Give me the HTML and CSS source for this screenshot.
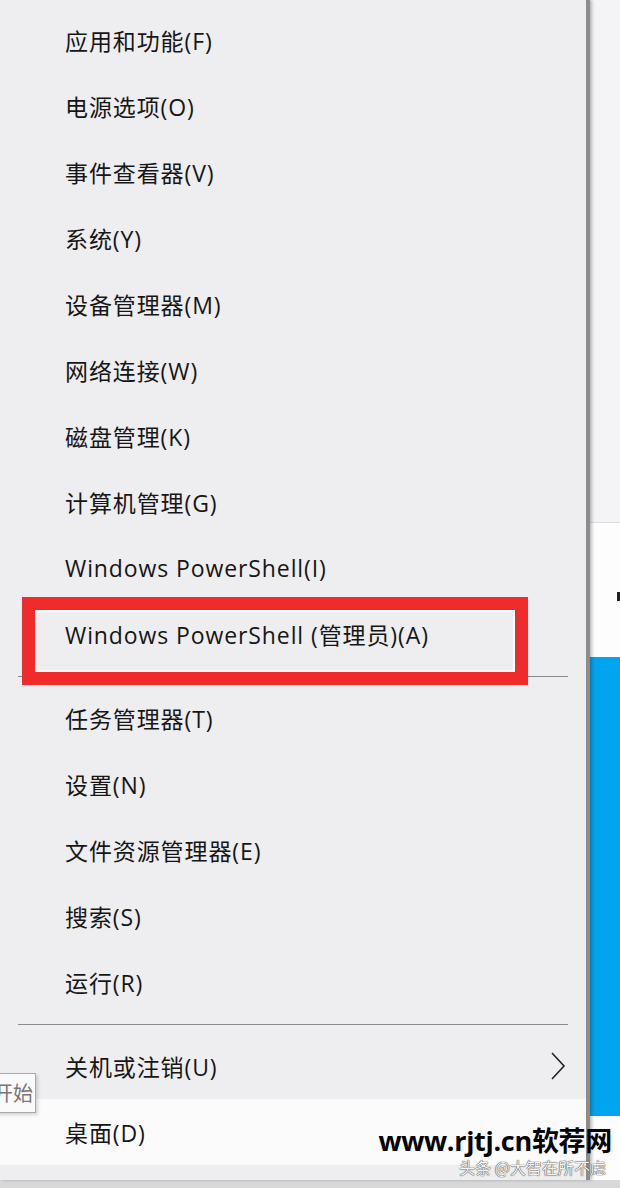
FILE: index.html
```html
<!DOCTYPE html>
<html lang="zh-CN">
<head>
    <meta charset="UTF-8">
    <title>开始菜单</title>
    <link rel="stylesheet" href="styles.css">
</head>
<body>
    <div class="screen">
        <div class="menu">
            <div class="item">应用和功能(F)</div>
            <div class="item">电源选项(O)</div>
            <div class="item">事件查看器(V)</div>
            <div class="item">系统(Y)</div>
            <div class="item">设备管理器(M)</div>
            <div class="item">网络连接(W)</div>
            <div class="item">磁盘管理(K)</div>
            <div class="item">计算机管理(G)</div>
            <div class="item">Windows PowerShell(I)</div>
            <div class="item">Windows PowerShell (管理员)(A)</div>
            <div class="sep"></div>
            <div class="item">任务管理器(T)</div>
            <div class="item">设置(N)</div>
            <div class="item">文件资源管理器(E)</div>
            <div class="item">搜索(S)</div>
            <div class="item">运行(R)</div>
            <div class="sep"></div>
            <div class="item has-sub">
                关机或注销(U)
                <svg class="chevron" width="16" height="30" viewBox="0 0 16 30">
                    <path d="M2 2 L14 15 L2 28" fill="none" stroke="#222" stroke-width="1.6"/>
                </svg>
            </div>
            <div class="item active">桌面(D)</div>
            <div class="mark"></div>
            <div class="tooltip">开始</div>
        </div>
        <div class="side">
            <div class="side-top"></div>
            <div class="side-white"><span class="tick"></span></div>
            <div class="side-blue"></div>
            <div class="side-bottom"></div>
        </div>
    </div>
    <div class="bottom-strip"></div>
    <div class="watermark">
        <div class="wm-site">www.rjtj.cn软荐网</div>
        <div class="wm-author">头条 @大智在所不虑</div>
    </div>
</body>
</html>
```

FILE: styles.css
```css
body {
    margin: 0;
    background: #f3f2f4;
    font-family: "Open Sans", "Noto Sans CJK SC", sans-serif;
    width: 620px;
    height: 1188px;
    overflow: hidden;
    position: relative;
}
.screen {
    display: flex;
    height: 1180px;
}
.menu {
    position: relative;
    width: 590px;
    flex: none;
    background: #eeedef;
    padding-top: 7px;
    box-sizing: border-box;
    border-right: 4px solid #8c8b8d;
    box-shadow: 2px 0 3px rgba(0, 0, 0, 0.25);
    z-index: 1;
}
.item {
    height: 66px;
    display: flex;
    align-items: center;
    padding-left: 65px;
    font-size: 23px;
    letter-spacing: 0.9px;
    color: #161616;
    white-space: nowrap;
}
.item.active {
    background: #fbfbfb;
}
.has-sub {
    justify-content: space-between;
    padding-right: 20px;
}
.sep {
    height: 18px;
    display: flex;
    align-items: center;
}
.sep::before {
    content: "";
    margin-left: 18px;
    width: 550px;
    height: 1px;
    background: #8a8a8a;
}
.mark {
    position: absolute;
    left: 22px;
    top: 597px;
    width: 480px;
    height: 62px;
    border: 13px solid #ef2b2b;
    box-shadow: inset 0 0 0 2px #fbfbfb;
}
.tooltip {
    position: absolute;
    left: -10px;
    top: 1073px;
    width: 34px;
    height: 38px;
    padding-left: 10px;
    background: #fafafa;
    border: 1px solid #a9a9a9;
    box-shadow: 2px 2px 3px rgba(0, 0, 0, 0.15);
    color: #777;
    font-size: 20px;
    line-height: 38px;
    font-family: "Noto Sans CJK SC", sans-serif;
    overflow: hidden;
    white-space: nowrap;
}
.tooltip::first-letter {
    margin-left: -8px;
}
.side {
    flex: 1;
    display: flex;
    flex-direction: column;
}
.side-top {
    height: 522px;
    background: #f4f3f5;
    border-bottom: 1px solid #dcdcdc;
}
.side-white {
    height: 134px;
    background: #fdfdfd;
    position: relative;
}
.tick {
    position: absolute;
    right: 0;
    top: 69px;
    width: 3px;
    height: 9px;
    background: #222;
}
.side-blue {
    height: 459px;
    background: #00a4ef;
}
.side-bottom {
    flex: 1;
    background: #fdfdfd;
}
.bottom-strip {
    height: 8px;
    background: #d8d8da;
}
.watermark {
    position: absolute;
    right: 8px;
    top: 1125px;
    z-index: 2;
    text-align: right;
    white-space: nowrap;
}
.wm-site {
    font-family: "Open Sans", "Noto Sans CJK SC", sans-serif;
    font-weight: 700;
    font-size: 27px;
    line-height: 31px;
    letter-spacing: -0.3px;
    color: #000;
}
.wm-author {
    margin-top: 2px;
    margin-right: 6px;
    font-family: "Noto Sans CJK SC", sans-serif;
    font-size: 16px;
    line-height: 18px;
    color: #f4f4f4;
    text-shadow: 0 0 1px #333, 0 0 1px #333;
}
```
